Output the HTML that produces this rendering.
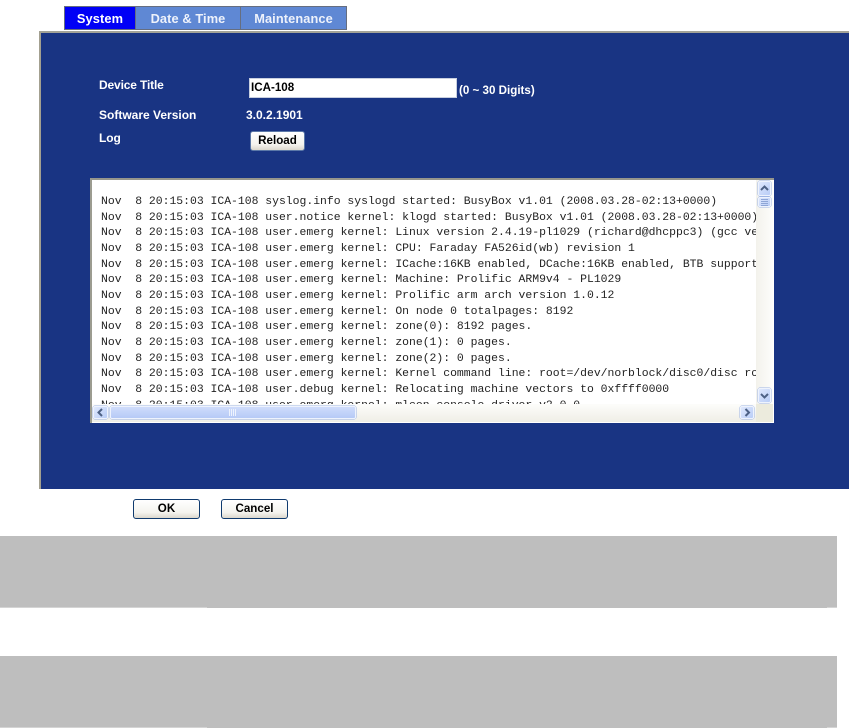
<!DOCTYPE html>
<html><head><meta charset="utf-8">
<style>
html,body{margin:0;padding:0;background:#fff;}
body{position:relative;width:856px;height:728px;overflow:hidden;font-family:"Liberation Sans",sans-serif;}
.a{position:absolute;box-sizing:border-box;}
.tab{position:absolute;top:6px;height:24px;background:#5f88d4;border:1px solid #666e80;color:#eef2fb;font:bold 12.8px/23px "Liberation Sans",sans-serif;text-align:center;box-sizing:border-box;letter-spacing:.1px;}
.lb{position:absolute;color:#fff;font:bold 12px/14px "Liberation Sans",sans-serif;white-space:nowrap;}
.btn{position:absolute;box-sizing:border-box;background:linear-gradient(#fff,#f4f3ee 70%,#dcd8cc);border:1px solid #0f3a6e;border-radius:3px;color:#000;font:bold 11.6px/17px "Liberation Sans",sans-serif;text-align:center;}
#log{position:absolute;left:101px;top:194px;width:657px;height:210px;overflow:hidden;font:11.42px/15.67px "Liberation Mono",monospace;color:#222;white-space:pre;}
.sb{position:absolute;box-sizing:border-box;background:linear-gradient(135deg,#dfe8fd,#b9cdf7);border:1px solid #eef3fd;border-radius:2px;box-shadow:0 0 0 .5px #9db4e4;}
</style></head><body>
<div class="tab" style="left:64px;width:72px;background:#0000f6;color:#fff">System</div>
<div class="tab" style="left:135px;width:106px;">Date &amp; Time</div>
<div class="tab" style="left:240px;width:107px;">Maintenance</div>

<div class="a" style="left:39px;top:31px;width:810px;height:458px;background:#193483;border-top:2px solid #a3a398;border-left:2px solid #a3a090;"></div>

<div class="lb" style="left:99px;top:78px;letter-spacing:-.15px">Device Title</div>
<div class="a" style="left:249px;top:78px;width:208px;height:20px;background:#fff;border:1px solid #c8cfdf;color:#000;font:bold 11.6px/18px 'Liberation Sans',sans-serif;padding-left:1px;">ICA-108</div>
<div class="lb" style="left:459px;top:84px;font-size:11.6px">(0 ~ 30 Digits)</div>
<div class="lb" style="left:99px;top:108px">Software Version</div>
<div class="lb" style="left:246px;top:108px">3.0.2.1901</div>
<div class="lb" style="left:99px;top:131px;letter-spacing:-.1px">Log</div>
<div class="btn" style="left:250px;top:131px;width:55px;height:20px;border-color:#5b78a8;">Reload</div>

<div class="a" style="left:90px;top:178px;width:684px;height:245px;background:#fff;border-top:2px solid #96968c;border-left:2px solid #9c9c90;"></div>
<div id="log">Nov  8 20:15:03 ICA-108 syslog.info syslogd started: BusyBox v1.01 (2008.03.28-02:13+0000)
Nov  8 20:15:03 ICA-108 user.notice kernel: klogd started: BusyBox v1.01 (2008.03.28-02:13+0000)
Nov  8 20:15:03 ICA-108 user.emerg kernel: Linux version 2.4.19-pl1029 (richard@dhcppc3) (gcc ve
Nov  8 20:15:03 ICA-108 user.emerg kernel: CPU: Faraday FA526id(wb) revision 1
Nov  8 20:15:03 ICA-108 user.emerg kernel: ICache:16KB enabled, DCache:16KB enabled, BTB support
Nov  8 20:15:03 ICA-108 user.emerg kernel: Machine: Prolific ARM9v4 - PL1029
Nov  8 20:15:03 ICA-108 user.emerg kernel: Prolific arm arch version 1.0.12
Nov  8 20:15:03 ICA-108 user.emerg kernel: On node 0 totalpages: 8192
Nov  8 20:15:03 ICA-108 user.emerg kernel: zone(0): 8192 pages.
Nov  8 20:15:03 ICA-108 user.emerg kernel: zone(1): 0 pages.
Nov  8 20:15:03 ICA-108 user.emerg kernel: zone(2): 0 pages.
Nov  8 20:15:03 ICA-108 user.emerg kernel: Kernel command line: root=/dev/norblock/disc0/disc ro
Nov  8 20:15:03 ICA-108 user.debug kernel: Relocating machine vectors to 0xffff0000
Nov  8 20:15:03 ICA-108 user.emerg kernel: mlcon console driver v2.0.0</div>

<!-- vertical scrollbar -->
<div class="a" style="left:756px;top:180px;width:17px;height:225px;background:linear-gradient(90deg,#f3f2ec,#fdfdfb);"></div>
<div class="sb" style="left:758px;top:181px;width:13px;height:15px;"></div>
<svg class="a" style="left:758px;top:181px" width="13" height="15"><path d="M3 9 L6.5 5.5 L10 9" fill="none" stroke="#4d6185" stroke-width="2"/></svg>
<div class="sb" style="left:758px;top:197px;width:13px;height:10px;"></div>
<svg class="a" style="left:758px;top:197px" width="13" height="10"><path d="M3 2.5H10M3 4.5H10M3 6.5H10M3 8.5H10" stroke="#8ea6d6" stroke-width="1"/></svg>
<div class="sb" style="left:758px;top:388px;width:13px;height:15px;"></div>
<svg class="a" style="left:758px;top:388px" width="13" height="15"><path d="M3 6 L6.5 9.5 L10 6" fill="none" stroke="#4d6185" stroke-width="2"/></svg>

<!-- horizontal scrollbar -->
<div class="a" style="left:92px;top:404px;width:664px;height:18px;background:linear-gradient(#fdfdfb,#efeee6);"></div>
<div class="a" style="left:756px;top:404px;width:17px;height:18px;background:#ecebdd;"></div>
<div class="sb" style="left:93px;top:406px;width:15px;height:13px;"></div>
<svg class="a" style="left:93px;top:406px" width="15" height="13"><path d="M9 3 L5.5 6.5 L9 10" fill="none" stroke="#4d6185" stroke-width="2"/></svg>
<div class="sb" style="left:110px;top:406px;width:246px;height:13px;background:linear-gradient(#cfdcfb,#c2d3f9 50%,#b6caf6);"></div>
<svg class="a" style="left:228px;top:408px" width="10" height="9"><path d="M1.5 1V8M3.5 1V8M5.5 1V8M7.5 1V8" stroke="#eef3fd" stroke-width="1"/></svg>
<div class="sb" style="left:740px;top:406px;width:14px;height:13px;"></div>
<svg class="a" style="left:740px;top:406px" width="14" height="13"><path d="M5.5 3 L9 6.5 L5.5 10" fill="none" stroke="#4d6185" stroke-width="2"/></svg>

<div class="btn" style="left:133px;top:499px;width:67px;height:20px;">OK</div>
<div class="btn" style="left:221px;top:499px;width:67px;height:20px;">Cancel</div>

<div class="a" style="left:0;top:536px;width:837px;height:72px;background:#bebebe;"></div>
<div class="a" style="left:0;top:607px;width:207px;height:1px;background:#d4d4d4;"></div>
<div class="a" style="left:827px;top:607px;width:10px;height:1px;background:#d4d4d4;"></div>
<div class="a" style="left:0;top:656px;width:837px;height:72px;background:#bebebe;"></div>
<div class="a" style="left:0;top:727px;width:207px;height:1px;background:#d4d4d4;"></div>
<div class="a" style="left:827px;top:727px;width:10px;height:1px;background:#d4d4d4;"></div>
</body></html>
